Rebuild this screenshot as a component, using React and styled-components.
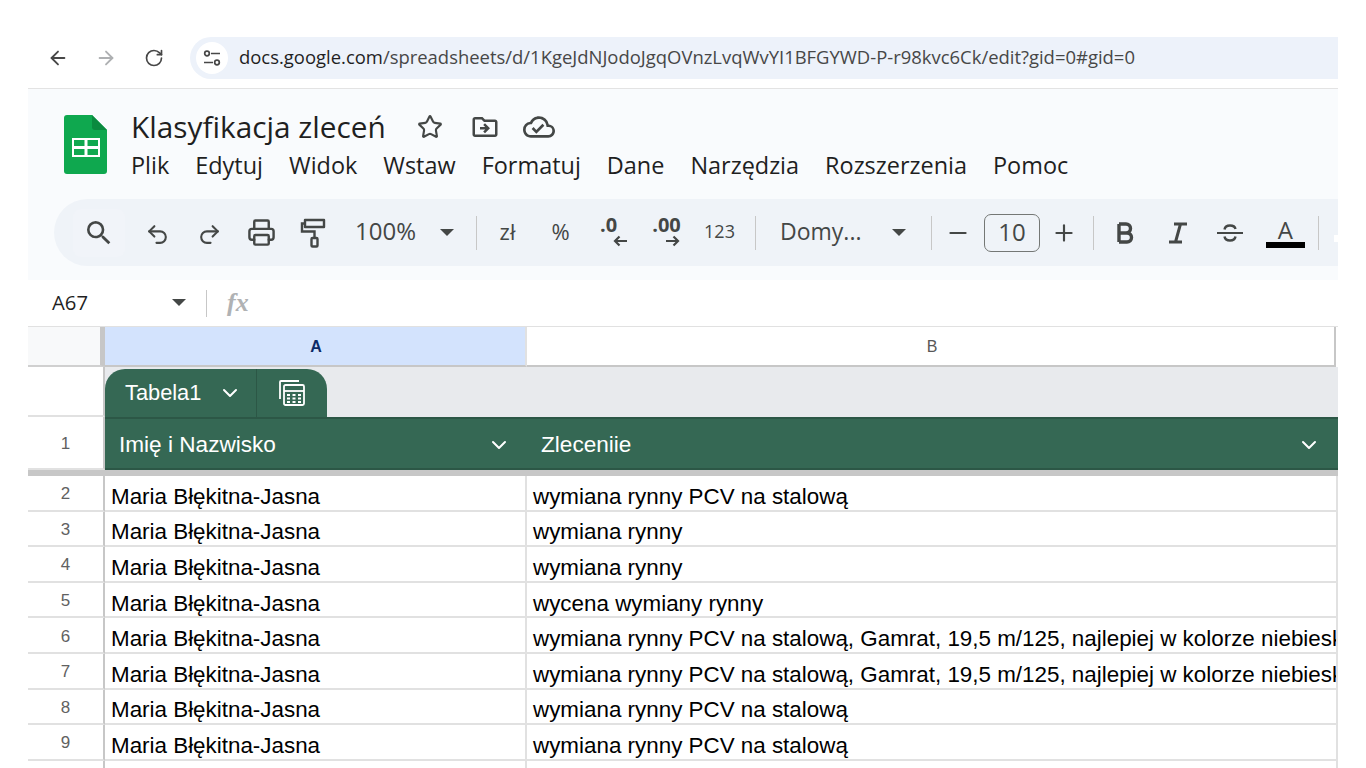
import React from "react";
import styled, { createGlobalStyle } from "styled-components";
import { Undo2, Redo2, Printer, Star, Minus, Plus, ChevronDown, ArrowLeft, ArrowRight, RotateCw } from "lucide-react";
import { MdOutlineCloudDone, MdOutlineDriveFileMove, MdSearch } from "react-icons/md";

const UI_FONT = `"Open Sans", "Noto Sans", sans-serif`;
const CELL_FONT = `"Liberation Sans", Arial, sans-serif`;

const GlobalStyle = createGlobalStyle`
  html, body {
    margin: 0;
    height: 768px;
    overflow: hidden;
    background: #ffffff;
  }
`;

const Page = styled.div`
  width: 1310px;
  height: 768px;
  margin-left: 28px;
  padding-top: 37px;
  box-sizing: border-box;
  overflow: hidden;
  font-family: ${UI_FONT};
  color: #444746;
`;

const BrowserBar = styled.div`
  display: flex;
  align-items: center;
  height: 42px;
  padding-bottom: 9px;
  padding-left: 6px;
  border-bottom: 1px solid #e3e3e3;
`;

const NavButton = styled.div`
  width: 48px;
  flex: none;
  display: flex;
  justify-content: center;
  color: ${(p) => (p.$muted ? "#aeb0b2" : "#474747")};
`;

const AddressBar = styled.div`
  flex: 1;
  height: 42px;
  margin-left: 12px;
  display: flex;
  align-items: center;
  background: #edf2fa;
  border-radius: 21px 0 0 21px;
  font-size: 18.45px;
  color: #474747;
  white-space: nowrap;
`;

const SiteInfo = styled.div`
  width: 32px;
  height: 32px;
  margin: 0 11px 0 6px;
  flex: none;
  display: flex;
  align-items: center;
  justify-content: center;
  border-radius: 50%;
  background: #ffffff;
`;

const UrlText = styled.span`
  margin-top: -3px;
`;

const Host = styled.span`
  color: #1f1f1f;
`;

const DocsHeader = styled.div`
  height: 191px;
  background: #f9fbfd;
`;

const TitleArea = styled.div`
  display: flex;
  height: 110px;
  padding-left: 36px;
  box-sizing: border-box;
`;

const LogoBox = styled.div`
  margin-top: 26px;
  width: 43px;
  height: 59px;
  flex: none;
`;

const TitleColumn = styled.div`
  margin-left: 24px;
  display: flex;
  flex-direction: column;
`;

const TitleRow = styled.div`
  display: flex;
  align-items: center;
  height: 40px;
  margin-top: 18px;
`;

const Title = styled.div`
  font-size: 29.8px;
  line-height: 40px;
  color: #1f1f1f;
  width: 255px;
  white-space: nowrap;
`;

const TitleIcon = styled.div`
  width: 54px;
  flex: none;
  display: flex;
  justify-content: center;
  color: #444746;
  margin-left: ${(p) => p.$offset || 0}px;
`;

const MenuRow = styled.div`
  display: flex;
  gap: 26px;
  font-size: 23.45px;
  line-height: 36px;
  color: #1f1f1f;
  white-space: nowrap;
`;

const Toolbar = styled.div`
  height: 67px;
  margin-left: 26px;
  padding-left: 19px;
  display: flex;
  align-items: center;
  background: #eff3f8;
  border-radius: 34px 0 0 34px;
  color: #444746;
`;

const ToolButton = styled.div`
  width: ${(p) => p.$w || 52}px;
  margin-left: ${(p) => p.$ml || 0}px;
  height: 48px;
  flex: none;
  display: flex;
  align-items: center;
  justify-content: ${(p) => (p.$pr ? "space-between" : "center")};
  padding: ${(p) => (p.$pr ? `0 ${p.$pr}px 0 ${p.$pl}px` : "0")};
  padding-top: ${(p) => (p.$drop ? "4px" : "0")};
  box-sizing: border-box;
  font-size: ${(p) => p.$size || 24}px;
  white-space: nowrap;
  background: ${(p) => (p.$active ? "#f1f4f9" : "transparent")};
  border-radius: 8px;
`;

const ToolText = styled.span`
  margin-top: -4px;
`;

const Separator = styled.div`
  width: 1px;
  height: ${(p) => p.$h || 34}px;
  flex: none;
  margin-left: ${(p) => p.$l}px;
  margin-right: ${(p) => p.$r}px;
  background: #c7c7c7;
`;

const Caret = styled.div`
  width: 0;
  height: 0;
  flex: none;
  border-left: 7px solid transparent;
  border-right: 7px solid transparent;
  border-top: 7px solid #444746;
`;

const Decimal = styled.div`
  display: flex;
  flex-direction: column;
  align-items: flex-start;
  font-size: 20px;
  font-weight: 700;
  line-height: 12px;
`;

const DecimalArrow = styled.div`
  display: flex;
  margin-top: 4px;
  margin-left: ${(p) => p.$ml}px;
`;

const FontSizeBox = styled.div`
  width: 56px;
  height: 38px;
  flex: none;
  box-sizing: border-box;
  padding-bottom: 2px;
  display: flex;
  align-items: center;
  justify-content: center;
  border: 1px solid #747775;
  border-radius: 7px;
  font-size: 24px;
`;

const ColorA = styled.div`
  display: flex;
  flex-direction: column;
  align-items: center;
  width: 40px;
  margin-left: 5px;
  font-size: 24px;
  line-height: 25px;
`;

const ColorSwatch = styled.div`
  width: 39px;
  height: 6px;
  background: #000000;
`;

const ToolbarStub = styled.div`
  width: 5px;
  height: 7px;
  margin: 12px 0 0 15px;
  flex: none;
  background: #ffffff;
`;

const NameBar = styled.div`
  height: 47px;
  display: flex;
  align-items: center;
  background: #ffffff;
  border-bottom: 1px solid #e1e1e1;
  box-sizing: border-box;
`;

const NameBox = styled.div`
  width: 158px;
  padding-left: 24px;
  box-sizing: border-box;
  flex: none;
  display: flex;
  align-items: center;
  justify-content: space-between;
  font-size: 20.3px;
  color: #1f1f1f;
  margin-top: -2px;
`;

const FxLabel = styled.div`
  margin-left: 20px;
  font-family: "Liberation Serif", serif;
  font-style: italic;
  font-weight: 700;
  font-size: 26px;
  color: #b0b2b4;
`;

const Row = styled.div`
  display: grid;
  grid-template-columns: 77px 422px 1fr;
  height: ${(p) => p.$h}px;
  box-sizing: border-box;
`;

const RowHead = styled.div`
  display: flex;
  align-items: center;
  justify-content: center;
  padding-top: 3px;
  font-family: ${CELL_FONT};
  font-size: 17px;
  color: #616161;
  background: #ffffff;
  border-right: 2px solid #c7c7c7;
  border-bottom: 2px solid #e1e1e1;
`;

const Corner = styled.div`
  background: #f8f9fa;
  border-right: 5px solid #c7c7c7;
  border-bottom: 2px solid #d0d0d0;
`;

const ColHead = styled.div`
  display: flex;
  align-items: center;
  justify-content: center;
  padding-top: 2px;
  padding-left: ${(p) => (p.$selected ? 2 : 3)}px;
  font-family: ${CELL_FONT};
  font-size: 16px;
  font-weight: ${(p) => (p.$selected ? 700 : 400)};
  color: ${(p) => (p.$selected ? "#0b2a66" : "#575757")};
  background: ${(p) => (p.$selected ? "#d3e3fd" : "#ffffff")};
  border-right: 2px solid ${(p) => (p.$selected ? "#e1e1e1" : "#c7c7c7")};
  border-bottom: 2px solid #c7c7c7;
  margin-right: ${(p) => (p.$selected ? 0 : 2)}px;
`;

const TabStrip = styled.div`
  grid-column: 2 / 4;
  display: flex;
  align-items: flex-end;
  background: #e8eaed;
`;

const Tab = styled.div`
  width: 222px;
  height: 48px;
  display: flex;
  align-items: center;
  background: #356854;
  border-radius: 20px 20px 0 0;
  color: #ffffff;
`;

const TabName = styled.div`
  width: 152px;
  height: 100%;
  flex: none;
  padding: 0 14px 0 20px;
  box-sizing: border-box;
  display: flex;
  align-items: center;
  justify-content: space-between;
  font-family: ${CELL_FONT};
  font-size: 21.8px;
  border-right: 1px solid #2c5746;
`;

const TabIcon = styled.div`
  flex: 1;
  display: flex;
  justify-content: center;
`;

const HeaderCell = styled.div`
  display: flex;
  align-items: center;
  justify-content: space-between;
  padding: 3px ${(p) => p.$pr}px 0 14px;
  font-family: ${CELL_FONT};
  font-size: 22.6px;
  color: #ffffff;
  background: #356854;
  border-top: 2px solid #2c5746;
  border-bottom: 2px solid #2c5746;
`;

const FrozenLine = styled.div`
  height: 6px;
  background: #c7c7c7;
`;

const Cell = styled.div`
  display: flex;
  align-items: center;
  padding-left: 6px;
  padding-top: 8px;
  box-sizing: border-box;
  overflow: hidden;
  white-space: nowrap;
  font-family: ${CELL_FONT};
  font-size: 22.4px;
  color: #000000;
  background: #ffffff;
  border-right: 2px solid #e1e1e1;
  border-bottom: 2px solid #e1e1e1;
`;

const SheetsLogo = () => (
  <svg width="43" height="59" viewBox="0 0 43 59">
    <path d="M3 0H28L43 15V56a3 3 0 0 1-3 3H3a3 3 0 0 1-3-3V3a3 3 0 0 1 3-3z" fill="#0fa84f" />
    <path d="M28 0L43 15H31a3 3 0 0 1-3-3z" fill="#0b8a3f" />
    <path d="M8 23H36V42H8zM10 25V31H20.5V25zM23.5 25V31H34V25zM10 34V40H20.5V34zM23.5 34V40H34V34z" fill="#ffffff" fillRule="evenodd" />
  </svg>
);

const TuneIcon = () => (
  <svg width="20" height="20" viewBox="0 0 20 20" fill="none" stroke="#474747" strokeWidth="1.7">
    <circle cx="5" cy="5.5" r="2.3" />
    <path d="M9 5.5H18M2 14.5H11" />
    <circle cx="15" cy="14.5" r="2.3" />
  </svg>
);

const ArrowSmall = ({ left }) => (
  <svg width="14" height="12" viewBox="0 0 14 12" fill="none" stroke="#444746" strokeWidth="2.2">
    {left ? <path d="M14 6H2M6.5 1.5L2 6l4.5 4.5" /> : <path d="M0 6H12M7.5 1.5L12 6l-4.5 4.5" />}
  </svg>
);

const RollerIcon = () => (
  <svg width="26" height="30" viewBox="0 0 26 30" fill="none" stroke="#444746" strokeWidth="2.4">
    <path d="M5 2H24V9H5z" strokeLinejoin="round" />
    <path d="M5 5.5H2V13.5H14.5V20" />
    <rect x="11.5" y="20" width="6" height="8.5" rx="1" />
  </svg>
);

const StrikeIcon = () => (
  <svg width="28" height="24" viewBox="0 0 28 24" fill="none" stroke="#444746" strokeWidth="2">
    <path d="M1 12H27" />
    <path d="M8.5 8.5C9 5.5 11 4.5 14 4.5s5 1 5.5 3.5M8.5 15.5C9 18.5 11 19.5 14 19.5s5-1 5.5-4" strokeWidth="2.4" />
  </svg>
);

const BoldIcon = () => (
  <svg width="18" height="22" viewBox="0 0 18 22" fill="none" stroke="#444746" strokeWidth="3.4">
    <path d="M3 2V20M3 2H10A4.5 4.5 0 0 1 10 11H3M3 11H11A4.5 4.5 0 0 1 11 20H3" />
  </svg>
);

const ItalicIcon = () => (
  <svg width="20" height="22" viewBox="0 0 20 22" fill="none" stroke="#444746" strokeWidth="3">
    <path d="M6 2H19M1 20H14M12.5 2L7.5 20" />
  </svg>
);

const CalcIcon = () => (
  <svg width="30" height="30" viewBox="0 0 30 30" fill="none" stroke="#ffffff" strokeWidth="1.8">
    <path d="M3 21V4a1 1 0 0 1 1-1h18" />
    <rect x="7" y="7" width="20" height="20" rx="1.5" />
    <path d="M7 13H27" />
    <path d="M10 17h3M15.5 17h3M21 17h3M10 20.5h3M15.5 20.5h3M21 20.5h3M10 24h3M15.5 24h3M21 24h3" strokeWidth="2" />
  </svg>
);

const MENU = ["Plik", "Edytuj", "Widok", "Wstaw", "Formatuj", "Dane", "Narzędzia", "Rozszerzenia", "Pomoc"];

const LONG_TEXT = "wymiana rynny PCV na stalową, Gamrat, 19,5 m/125, najlepiej w kolorze niebieskim";

const ROWS = [
  [2, "wymiana rynny PCV na stalową"],
  [3, "wymiana rynny"],
  [4, "wymiana rynny"],
  [5, "wycena wymiany rynny"],
  [6, LONG_TEXT],
  [7, LONG_TEXT],
  [8, "wymiana rynny PCV na stalową"],
  [9, "wymiana rynny PCV na stalową"],
];

export default function App() {
  return (
    <Page>
      <GlobalStyle />
      <BrowserBar>
        <NavButton><ArrowLeft size={22} strokeWidth={2} /></NavButton>
        <NavButton $muted><ArrowRight size={22} strokeWidth={2} /></NavButton>
        <NavButton><RotateCw size={20} strokeWidth={2} /></NavButton>
        <AddressBar>
          <SiteInfo><TuneIcon /></SiteInfo>
          <UrlText>
            <Host>docs.google.com</Host>/spreadsheets/d/1KgeJdNJodoJgqOVnzLvqWvYI1BFGYWD-P-r98kvc6Ck/edit?gid=0#gid=0
          </UrlText>
        </AddressBar>
      </BrowserBar>

      <DocsHeader>
        <TitleArea>
          <LogoBox><SheetsLogo /></LogoBox>
          <TitleColumn>
            <TitleRow>
              <Title>Klasyfikacja zleceń</Title>
              <TitleIcon $offset={17}><Star size={26} strokeWidth={2} /></TitleIcon>
              <TitleIcon $offset={1}><MdOutlineDriveFileMove size={30} /></TitleIcon>
              <TitleIcon><MdOutlineCloudDone size={32} /></TitleIcon>
            </TitleRow>
            <MenuRow>
              {MENU.map((item) => (
                <span key={item}>{item}</span>
              ))}
            </MenuRow>
          </TitleColumn>
        </TitleArea>

        <Toolbar>
          <ToolButton $active><MdSearch size={32} /></ToolButton>
          <ToolButton $ml={6} $drop><Undo2 size={25} strokeWidth={2} /></ToolButton>
          <ToolButton $drop><Redo2 size={25} strokeWidth={2} /></ToolButton>
          <ToolButton><Printer size={29} strokeWidth={2} /></ToolButton>
          <ToolButton><RollerIcon /></ToolButton>
          <ToolButton $w={126} $pl={16} $pr={11}><ToolText>100%</ToolText><Caret /></ToolButton>
          <Separator $l={11} $r={4} />
          <ToolButton $w={53} $size={22}><ToolText>zł</ToolText></ToolButton>
          <ToolButton $w={53} $size={22}><ToolText>%</ToolText></ToolButton>
          <ToolButton $w={53}>
            <Decimal>.0<DecimalArrow $ml={13}><ArrowSmall left /></DecimalArrow></Decimal>
          </ToolButton>
          <ToolButton $w={53}>
            <Decimal>.00<DecimalArrow $ml={14}><ArrowSmall /></DecimalArrow></Decimal>
          </ToolButton>
          <ToolButton $w={53} $size={18}><ToolText>123</ToolText></ToolButton>
          <Separator $l={9} $r={4} />
          <ToolButton $w={165} $pl={20} $pr={19} $size={23}><ToolText>Domy...</ToolText><Caret /></ToolButton>
          <Separator $l={6} $r={0} />
          <ToolButton><Minus size={26} strokeWidth={2} /></ToolButton>
          <FontSizeBox>10</FontSizeBox>
          <ToolButton $w={48}><Plus size={26} strokeWidth={2} /></ToolButton>
          <Separator $l={5} $r={5} />
          <ToolButton $w={52.5}><BoldIcon /></ToolButton>
          <ToolButton $w={52.5}><ItalicIcon /></ToolButton>
          <ToolButton $w={52.5}><StrikeIcon /></ToolButton>
          <ToolButton $w={52.5}>
            <ColorA>A<ColorSwatch /></ColorA>
          </ToolButton>
          <Separator $l={9} $r={0} />
          <ToolbarStub />
        </Toolbar>
      </DocsHeader>

      <NameBar>
        <NameBox>A67<Caret /></NameBox>
        <Separator $l={20} $r={0} $h={27} />
        <FxLabel>fx</FxLabel>
      </NameBar>

      <Row $h={40}>
        <Corner />
        <ColHead $selected>A</ColHead>
        <ColHead>B</ColHead>
      </Row>
      <Row $h={50}>
        <RowHead />
        <TabStrip>
          <Tab>
            <TabName>Tabela1<ChevronDown size={24} strokeWidth={2} /></TabName>
            <TabIcon><CalcIcon /></TabIcon>
          </Tab>
        </TabStrip>
      </Row>
      <Row $h={53}>
        <RowHead>1</RowHead>
        <HeaderCell $pr={16}>Imię i Nazwisko<ChevronDown size={24} strokeWidth={2} /></HeaderCell>
        <HeaderCell $pr={17}>Zleceniie<ChevronDown size={24} strokeWidth={2} /></HeaderCell>
      </Row>
      <FrozenLine />
      {ROWS.map(([num, text]) => (
        <Row $h={35.6} key={num}>
          <RowHead>{num}</RowHead>
          <Cell>Maria Błękitna-Jasna</Cell>
          <Cell>{text}</Cell>
        </Row>
      ))}
      <Row $h={35.6}>
        <RowHead />
        <Cell />
        <Cell />
      </Row>
    </Page>
  );
}
